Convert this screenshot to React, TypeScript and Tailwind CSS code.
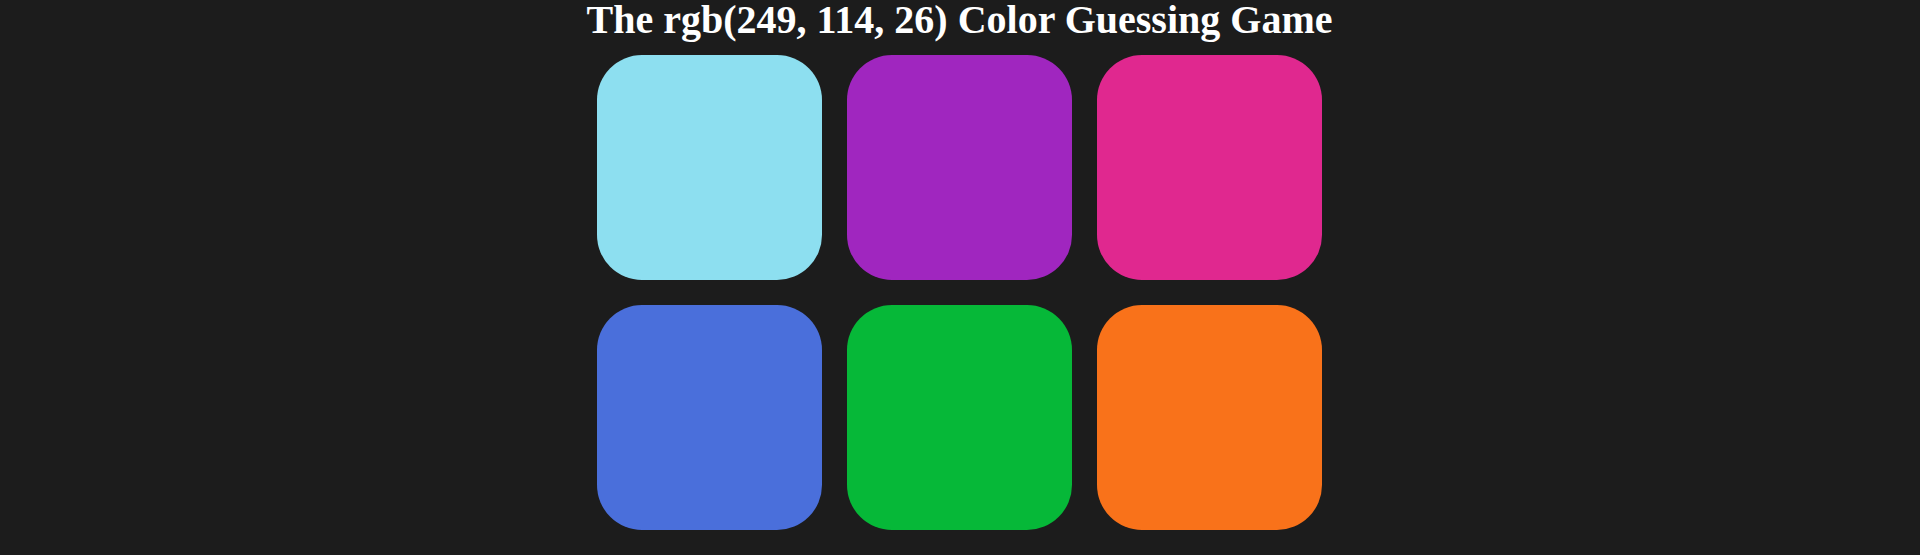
import React from "react";

const colors = [
  "bg-[#8ddff0]",
  "bg-[#a026bf]",
  "bg-[#e0288f]",
  "bg-[#4a6fdb]",
  "bg-[#06b838]",
  "bg-[#f9721a]",
];

export default function App() {
  return (
    <div className="w-[1920px] h-[555px] bg-[#1c1c1c] flex flex-col items-center" style={{ fontFamily: '"Liberation Serif", "Times New Roman", serif' }}>
      <h1 className="text-white font-bold text-[40px] leading-[40px] mt-0 pr-[1px]">The rgb(249, 114, 26) Color Guessing Game</h1>
      <div className="grid grid-cols-[repeat(3,225px)] gap-[25px] mt-[15px] pr-[1px]">
        {colors.map((c, i) => (
          <div key={i} className={`w-[225px] h-[225px] rounded-[20%] ${c}`} />
        ))}
      </div>
    </div>
  );
}
